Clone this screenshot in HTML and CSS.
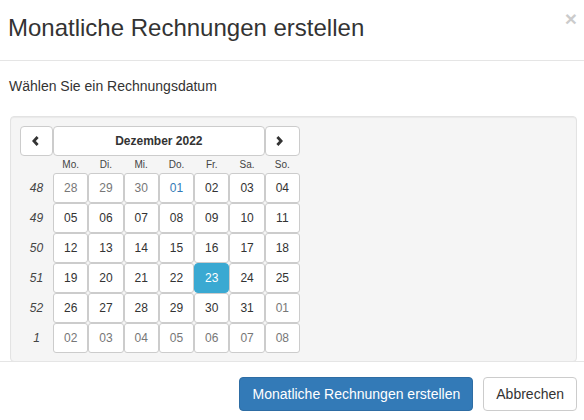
FILE: index.html
```html
<!DOCTYPE html>
<html lang="de">
<head>
<meta charset="utf-8">
<title>Monatliche Rechnungen erstellen</title>
<link rel="stylesheet" href="styles.css">
</head>
<body>
<div class="modal">
  <div class="modal-header">
    <h4 class="modal-title">Monatliche Rechnungen erstellen</h4>
    <button class="close" type="button">×</button>
  </div>
  <div class="modal-body">
    <p class="hint">Wählen Sie ein Rechnungsdatum</p>
    <div class="well">
      <div class="cal">
        <button class="nav prev" type="button"><svg width="7" height="10" viewBox="0 0 7 10"><path d="M5.6 1 L1.9 5 L5.6 9" fill="none" stroke="#333" stroke-width="2.8"/></svg></button>
        <button class="nav month" type="button">Dezember 2022</button>
        <button class="nav next" type="button"><svg width="7" height="10" viewBox="0 0 7 10"><path d="M1.4 1 L5.1 5 L1.4 9" fill="none" stroke="#333" stroke-width="2.8"/></svg></button>

        <span class="dow"></span>
        <span class="dow">Mo.</span><span class="dow">Di.</span><span class="dow">Mi.</span><span class="dow">Do.</span><span class="dow">Fr.</span><span class="dow">Sa.</span><span class="dow">So.</span>

        <span class="kw">48</span>
        <span class="day old">28</span><span class="day old">29</span><span class="day old">30</span><span class="day today">01</span><span class="day">02</span><span class="day">03</span><span class="day">04</span>

        <span class="kw">49</span>
        <span class="day">05</span><span class="day">06</span><span class="day">07</span><span class="day">08</span><span class="day">09</span><span class="day">10</span><span class="day">11</span>

        <span class="kw">50</span>
        <span class="day">12</span><span class="day">13</span><span class="day">14</span><span class="day">15</span><span class="day">16</span><span class="day">17</span><span class="day">18</span>

        <span class="kw">51</span>
        <span class="day">19</span><span class="day">20</span><span class="day">21</span><span class="day">22</span><span class="day active">23</span><span class="day">24</span><span class="day">25</span>

        <span class="kw">52</span>
        <span class="day">26</span><span class="day">27</span><span class="day">28</span><span class="day">29</span><span class="day">30</span><span class="day">31</span><span class="day old">01</span>

        <span class="kw">1</span>
        <span class="day old">02</span><span class="day old">03</span><span class="day old">04</span><span class="day old">05</span><span class="day old">06</span><span class="day old">07</span><span class="day old">08</span>
      </div>
    </div>
  </div>
  <div class="modal-footer">
    <button class="btn btn-primary" type="button">Monatliche Rechnungen erstellen</button>
    <button class="btn btn-default" type="button">Abbrechen</button>
  </div>
</div>
</body>
</html>
```

FILE: styles.css
```css
html, body {
  margin: 0;
  padding: 0;
  background: #fff;
}

body {
  font-family: "Liberation Sans", Arial, sans-serif;
  font-size: 14px;
  line-height: 20px;
  color: #333;
  overflow: hidden;
}

.modal {
  width: 584px;
  height: 420px;
  overflow: hidden;
}

.modal-header {
  display: flex;
  justify-content: space-between;
  align-items: flex-start;
  padding: 15px 7px 19px 8px;
  border-bottom: 1px solid #e5e5e5;
}

.modal-title {
  margin: 0;
  font-size: 24px;
  font-weight: normal;
  line-height: 26px;
  color: #333;
}

.close {
  margin-top: -7px;
  padding: 0;
  border: 0;
  background: transparent;
  font-family: "Liberation Sans", Arial, sans-serif;
  font-size: 21px;
  font-weight: bold;
  line-height: 21px;
  color: #000;
  opacity: 0.2;
}

.modal-body {
  padding: 15px 7px 0 9px;
}

.hint {
  margin: 0 0 20px;
}

.well {
  margin-left: 1px;
  padding: 9px 9px 8px;
  background: #f5f5f5;
  border: 1px solid #e3e3e3;
  border-radius: 4px;
  box-shadow: inset 0 1px 1px rgba(0, 0, 0, 0.05);
}

.cal {
  display: grid;
  width: 280px;
  grid-template-columns: 33px repeat(7, 1fr);
  grid-template-rows: 30px 17px repeat(6, 30px);
}

.nav {
  display: flex;
  align-items: center;
  justify-content: center;
  margin: 0;
  padding: 0;
  background: #fff;
  border: 1px solid #ccc;
  border-radius: 4px;
  font-family: "Liberation Sans", Arial, sans-serif;
  color: #333;
}

.nav svg {
  display: block;
}

.prev {
  padding-right: 3px;
}

.next {
  padding-right: 5px;
}

.month {
  grid-column: span 6;
  font-size: 12px;
  font-weight: bold;
}

.dow {
  display: flex;
  align-items: center;
  justify-content: center;
  font-size: 10px;
  color: #444;
}

.kw {
  display: flex;
  align-items: center;
  justify-content: center;
  font-size: 12px;
  font-style: italic;
  color: #444;
}

.day {
  display: flex;
  align-items: center;
  justify-content: center;
  background: #fff;
  border: 1px solid #ccc;
  border-radius: 3px;
  font-size: 12px;
  color: #333;
}

.day.old {
  color: #777;
}

.day.today {
  color: #337ab7;
}

.day.active {
  background: #3aa9d2;
  border-color: #3aa9d2;
  border-radius: 4px;
  color: #fff;
}

.modal-footer {
  display: flex;
  justify-content: flex-end;
  gap: 10px;
  margin-top: -1px;
  padding: 15px 7px 15px 10px;
  border-top: 1px solid #e5e5e5;
  position: relative;
}

.btn {
  margin: 0;
  padding: 6px 12px;
  font-family: "Liberation Sans", Arial, sans-serif;
  font-size: 14px;
  line-height: 20px;
  border: 1px solid transparent;
  border-radius: 4px;
}

.btn-primary {
  background: #337ab7;
  border-color: #2e6da4;
  color: #fff;
}

.btn-default {
  background: #fff;
  border-color: #ccc;
  color: #333;
}
```
